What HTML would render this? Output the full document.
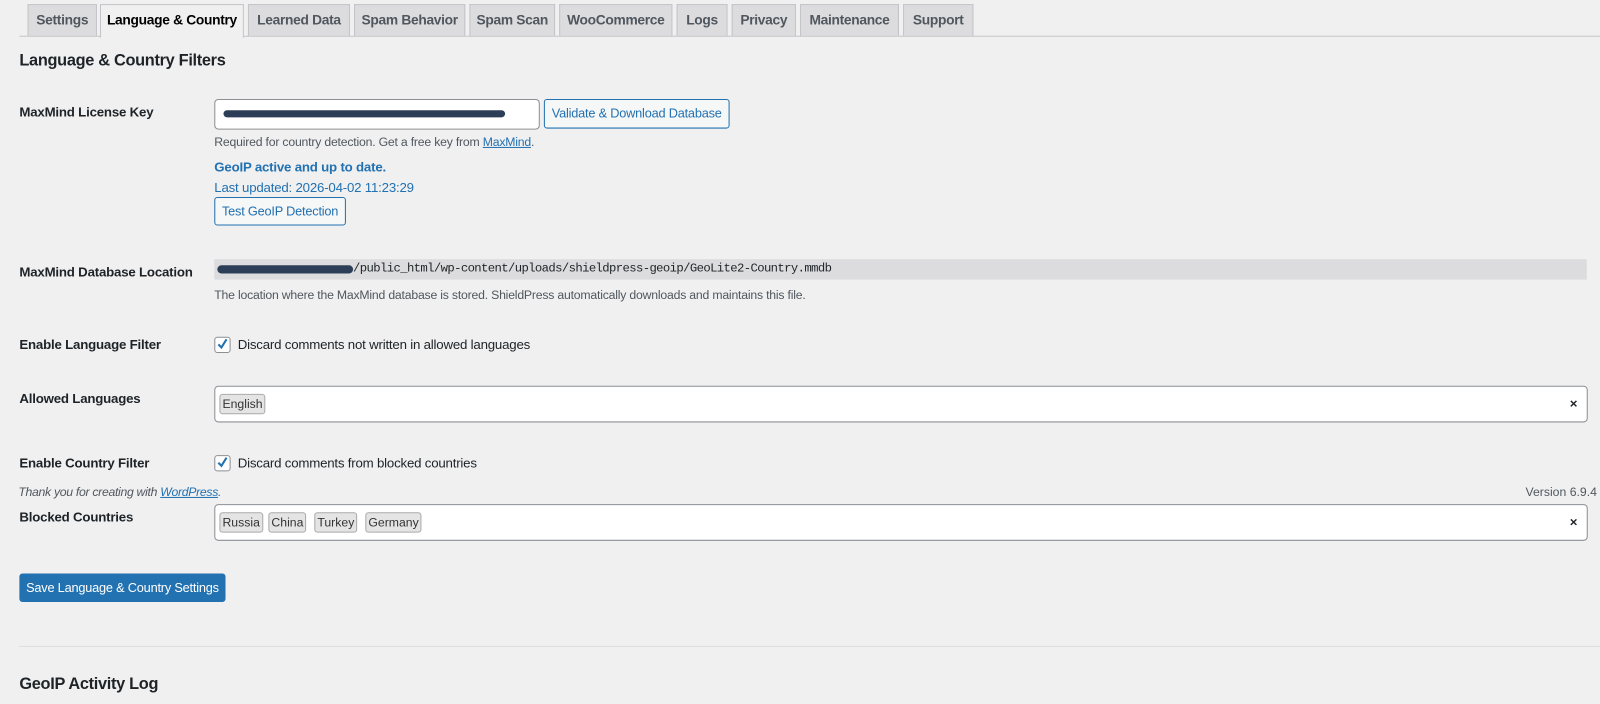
<!DOCTYPE html>
<html><head><meta charset="utf-8"><style>
body{margin:0;width:1600px;height:704px;background:#f0f0f1;overflow:hidden}
#w{position:absolute;left:0;top:0;width:1568px;height:690px;transform:scale(1.020408);transform-origin:0 0;font-family:"Liberation Sans",sans-serif;font-size:13px;color:#1d2327}
.a{position:absolute;white-space:nowrap}
.tab{position:absolute;top:4px;height:30px;line-height:30px;background:#dcdcde;border:1px solid #c3c4c7;border-bottom:none;text-align:center;font-size:13.5px;color:#50575e;font-weight:600;letter-spacing:-0.3px}
.tab.on{background:#f0f0f1;color:#000;height:32px}
.lbl{font-weight:bold;font-size:13px;left:19px;letter-spacing:-0.2px}
.btn{position:absolute;border:1px solid #2271b1;border-radius:3px;background:#f6f7f7;color:#2271b1;font-size:12.5px;text-align:center;letter-spacing:-0.2px}
.box{position:absolute;background:#fff;border:1px solid #8c8f94;border-radius:4px}
.tag{position:absolute;top:7px;height:18px;line-height:18px;background:#e4e4e4;border:1px solid #aaa;border-radius:3px;font-size:12px;padding:0 2px;color:#333}
.cb{position:absolute;width:14px;height:14px;border:1px solid #8c8f94;border-radius:3px;background:#fff}
.cb svg{position:absolute;left:-1px;top:-2px}
.desc{color:#50575e;font-size:12px;letter-spacing:-0.2px}
</style></head><body><div id="w">
<div class="tab" style="left:27px;width:66px">Settings</div>
<div class="tab" style="left:243px;width:98px">Learned Data</div>
<div class="tab" style="left:347px;width:107px">Spam Behavior</div>
<div class="tab" style="left:460px;width:82px">Spam Scan</div>
<div class="tab" style="left:548px;width:109px">WooCommerce</div>
<div class="tab" style="left:663px;width:48px">Logs</div>
<div class="tab" style="left:717px;width:61px">Privacy</div>
<div class="tab" style="left:784px;width:95px">Maintenance</div>
<div class="tab" style="left:885px;width:67px">Support</div>
<div class="a" style="left:19px;top:35px;width:1549px;height:1px;background:#c3c4c7"></div>
<div class="tab on" style="left:98px;width:139px">Language &amp; Country</div>

<div class="a" style="left:19px;top:51px;font-size:16px;font-weight:bold;letter-spacing:-0.3px">Language &amp; Country Filters</div>

<div class="a lbl" style="top:102px">MaxMind License Key</div>
<div class="box" style="left:210px;top:97px;width:317px;height:28px"><div class="a" style="left:8px;top:10px;width:276px;height:7px;background:#2c3e57;border-radius:4px"></div></div>
<div class="btn" style="left:533px;top:97px;width:180px;height:27px;line-height:27px">Validate &amp; Download Database</div>
<div class="a desc" style="left:210px;top:132px">Required for country detection. Get a free key from <span style="color:#2271b1;text-decoration:underline">MaxMind</span>.</div>
<div class="a" style="left:210px;top:156px;color:#2271b1;font-weight:bold;font-size:13px;letter-spacing:-0.2px">GeoIP active and up to date.</div>
<div class="a" style="left:210px;top:176px;color:#2271b1;font-size:13px;letter-spacing:-0.2px">Last updated: 2026-04-02 11:23:29</div>
<div class="btn" style="left:210px;top:193px;width:127px;height:26px;line-height:26px">Test GeoIP Detection</div>

<div class="a lbl" style="top:259px">MaxMind Database Location</div>
<div class="a" style="left:210px;top:254px;width:1345px;height:20px;background:#dcdcde"></div>
<div class="a" style="left:213px;top:260px;width:133px;height:8px;background:#2c3e57;border-radius:4px"></div>
<div class="a" style="left:346px;top:256px;font-family:'Liberation Mono',monospace;font-size:12px;letter-spacing:-0.6px">/public_html/wp-content/uploads/shieldpress-geoip/GeoLite2-Country.mmdb</div>
<div class="a desc" style="left:210px;top:282px">The location where the MaxMind database is stored. ShieldPress automatically downloads and maintains this file.</div>

<div class="a lbl" style="top:330px">Enable Language Filter</div>
<div class="cb" style="left:210px;top:330px"><svg width="16" height="16" viewBox="0 0 16 16"><path d="M4 8.5l3 3 5-8" stroke="#2271b1" stroke-width="2" fill="none"/></svg></div>
<div class="a" style="left:233px;top:330px;letter-spacing:-0.2px">Discard comments not written in allowed languages</div>

<div class="a lbl" style="top:383px">Allowed Languages</div>
<div class="box" style="left:210px;top:378px;width:1344px;height:34px"><div class="tag" style="left:4px">English</div><div class="a" style="right:9px;top:9px;font-weight:bold;font-size:13px">×</div></div>

<div class="a lbl" style="top:446px">Enable Country Filter</div>
<div class="cb" style="left:210px;top:446px"><svg width="16" height="16" viewBox="0 0 16 16"><path d="M4 8.5l3 3 5-8" stroke="#2271b1" stroke-width="2" fill="none"/></svg></div>
<div class="a" style="left:233px;top:446px;letter-spacing:-0.2px">Discard comments from blocked countries</div>

<div class="a" style="left:18px;top:475px;font-style:italic;font-size:12px;color:#50575e;letter-spacing:-0.3px">Thank you for creating with <span style="color:#2271b1;text-decoration:underline">WordPress</span>.</div>
<div class="a" style="right:3px;top:475px;font-size:12px;color:#50575e">Version 6.9.4</div>

<div class="a lbl" style="top:499px">Blocked Countries</div>
<div class="box" style="left:210px;top:494px;width:1344px;height:34px">
<div class="tag" style="left:4px">Russia</div><div class="tag" style="left:52px">China</div><div class="tag" style="left:97px">Turkey</div><div class="tag" style="left:147px">Germany</div>
<div class="a" style="right:9px;top:9px;font-weight:bold;font-size:13px">×</div></div>

<div class="a" style="left:19px;top:562px;width:200px;height:26px;line-height:26px;background:#2271b1;border:1px solid #2271b1;border-radius:3px;color:#fff;font-size:12.5px;text-align:center;letter-spacing:-0.2px">Save Language &amp; Country Settings</div>

<div class="a" style="left:19px;top:633px;width:1549px;height:1px;background:#dcdcde"></div>
<div class="a" style="left:19px;top:662px;font-size:16px;font-weight:bold;letter-spacing:-0.3px">GeoIP Activity Log</div>
</div></body></html>
